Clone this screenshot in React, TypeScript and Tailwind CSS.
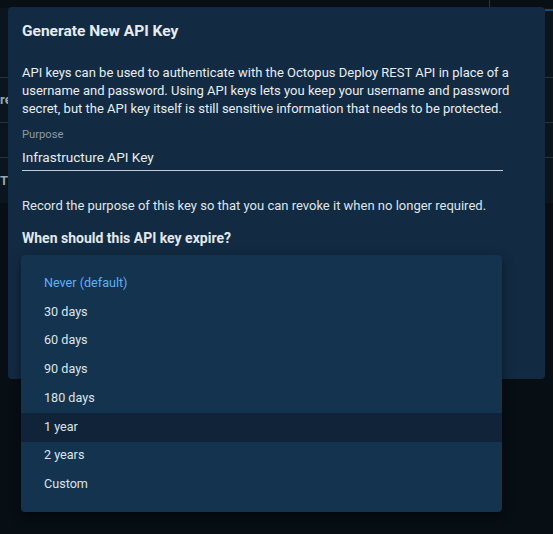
const options = [
  'Never (default)',
  '30 days',
  '60 days',
  '90 days',
  '180 days',
  '1 year',
  '2 years',
  'Custom',
];

const PageBehind = () => {
  return (
    <div className="flex flex-col">
      <div className="h-[8px] bg-[#081016] flex justify-end">
        <div className="w-[64px] border-l border-[#1d3a55]"></div>
      </div>
      <div className="h-[195px] bg-[#0b151e] flex flex-col">
        <div className="h-[69px] flex justify-end">
          <div className="w-[8px] border-t-2 border-[#1e4a70] mt-[1px]"></div>
        </div>
        <div className="h-[45px] border-t border-[#243240] text-[13px] text-[#9aa6b0] font-bold flex items-center">
          <span>re</span>
        </div>
        <div className="h-[35px] border-t border-[#243240]"></div>
        <div className="flex-1 border-t border-[#243240] text-[13px] text-[#9aa6b0] font-bold flex items-center">
          <span>T</span>
        </div>
      </div>
    </div>
  );
};

export default function App() {
  return (
    <div
      className="relative w-[553px] h-[534px] overflow-hidden bg-[#070e14]"
      style={{ fontFamily: 'Roboto, "Liberation Sans", sans-serif' }}
    >
      <PageBehind />

      <div className="absolute left-[8px] top-[7px] w-[537px] h-[372px] rounded-[4px] bg-[#122b42] px-[14px] text-[#e6ebef]">
        <h2 className="pt-[12px] text-[15.5px] font-bold leading-[24px]">
          Generate New API Key
        </h2>
        <p className="mt-[21px] text-[13px] leading-[18px] text-[#e8edf1]">
          API keys can be used to authenticate with the Octopus Deploy REST API in place of a
          username and password. Using API keys lets you keep your username and password secret,
          but the API key itself is still sensitive information that needs to be protected.
        </p>
        <div className="mt-[9px] mr-[28px]">
          <div className="text-[11.2px] leading-[16px] text-[#8d9aa6]">Purpose</div>
          <div className="mt-[4px] pb-[3px] text-[13.6px] leading-[20px] border-b border-[#c3ccd4]">
            Infrastructure API Key
          </div>
        </div>
        <p className="mt-[26px] text-[13px] leading-[18px] text-[#dfe5ea]">
          Record the purpose of this key so that you can revoke it when no longer required.
        </p>
        <h3 className="mt-[13px] text-[14px] font-bold leading-[20px] text-[#e3e8ec]">
          When should this API key expire?
        </h3>
      </div>

      <div className="absolute left-[21px] top-[255px] w-[481px] h-[257px] rounded-[4px] bg-[#14334f] pt-[14px] shadow-[0_4px_12px_rgba(0,0,0,0.45)]">
        {options.map((o, i) => (
          <div
            key={o}
            className={
              'h-[28.75px] flex items-center pl-[23px] text-[12.6px] ' +
              (i === 0 ? 'text-[#5fb1f5] ' : 'text-[#dde3e8] ') +
              (o === '1 year' ? 'bg-[#112338]' : '')
            }
          >
            {o}
          </div>
        ))}
      </div>
    </div>
  );
}
